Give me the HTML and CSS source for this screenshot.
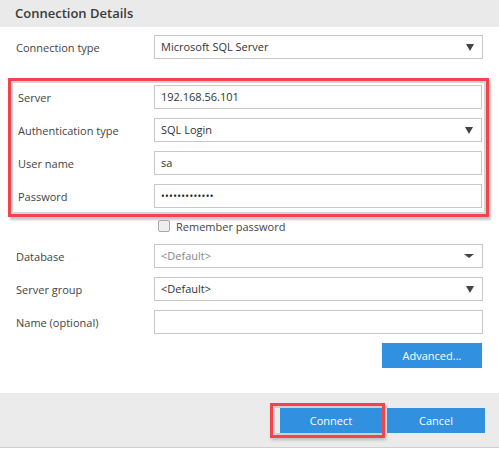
FILE: index.html
```html
<!DOCTYPE html>
<html lang="en">
<head>
    <meta charset="UTF-8">
    <title>Connection Details</title>
    <link rel="stylesheet" href="styles.css">
</head>
<body>

    <header class="dialog-title">Connection Details</header>

    <main class="dialog-body">
        <div class="row">
            <label>Connection type</label>
            <div class="select">
                <span>Microsoft SQL Server</span>
                <i class="caret"></i>
            </div>
        </div>

        <div class="highlight">
            <div class="row">
                <label>Server</label>
                <div class="field">192.168.56.101</div>
            </div>
            <div class="row">
                <label>Authentication type</label>
                <div class="select">
                    <span>SQL Login</span>
                    <i class="caret"></i>
                </div>
            </div>
            <div class="row">
                <label>User name</label>
                <div class="field">sa</div>
            </div>
            <div class="row">
                <label>Password</label>
                <div class="field dots">&bull;&bull;&bull;&bull;&bull;&bull;&bull;&bull;&bull;&bull;&bull;&bull;&bull;</div>
            </div>
        </div>

        <div class="row remember">
            <span></span>
            <label class="check"><span class="box"></span>Remember password</label>
        </div>

        <div class="row">
            <label>Database</label>
            <div class="select">
                <span class="placeholder">&lt;Default&gt;</span>
                <i class="caret small"></i>
            </div>
        </div>
        <div class="row">
            <label>Server group</label>
            <div class="select">
                <span>&lt;Default&gt;</span>
                <i class="caret"></i>
            </div>
        </div>
        <div class="row">
            <label>Name (optional)</label>
            <div class="field"></div>
        </div>

        <div class="actions">
            <button class="btn">Advanced...</button>
        </div>
    </main>

    <footer class="dialog-footer">
        <span class="highlight-btn"><button class="btn">Connect</button></span>
        <button class="btn">Cancel</button>
    </footer>

</body>
</html>
```

FILE: styles.css
```css
/* Global */
body {
    font-family: 'Open Sans', 'Noto Sans', sans-serif;
    font-size: 11px;
    color: #444;
    background-color: #fff;
    margin: 0;
    padding: 0;
    width: 499px;
}

/* Title bar */
.dialog-title {
    height: 27px;
    line-height: 26px;
    background-color: #e9eae9;
    padding-left: 15px;
    font-size: 13px;
    font-weight: 600;
    color: #3a3a3a;
}

.dialog-body {
    padding: 8px 16px 0 16px;
}

.row {
    display: grid;
    grid-template-columns: 138px 1fr;
    align-items: center;
    margin-bottom: 9px;
}

.row label {
    color: #444;
}

.field, .select {
    height: 22px;
    line-height: 22px;
    border: 1px solid #c8c8c8;
    padding: 0 6px;
    color: #333;
    background: #fff;
}

.select {
    position: relative;
}

.caret {
    position: absolute;
    right: 8px;
    top: 8px;
    width: 0;
    height: 0;
    border-left: 4px solid transparent;
    border-right: 4px solid transparent;
    border-top: 7px solid #444;
}

.caret.small {
    top: 9px;
    border-top-width: 4px;
    border-left-width: 5px;
    border-right-width: 5px;
}

.placeholder {
    color: #888;
}

.dots {
    font-size: 10px;
    letter-spacing: 0.3px;
    color: #222;
}

/* Red highlight (annotation) */
.highlight {
    margin: 19px -6px 2px -8px;
    border: 3px solid #f2444a;
    box-shadow: inset 0 0 0 2px #d4d4d4, 2px 3px 2px #c8c8c8;
    padding: 4px 4px 6px 7px;
}

.highlight .row {
    grid-template-columns: 136px 1fr;
}

.highlight .row:last-child {
    margin-bottom: 0;
}

.remember {
    margin-bottom: 11px;
}

.check {
    display: flex;
    align-items: center;
    gap: 6px;
    padding-left: 4px;
    height: 14px;
}

.box {
    width: 10px;
    height: 10px;
    border: 1px solid #aaa;
    border-radius: 2px;
    background: #eee;
}

.actions {
    display: flex;
    justify-content: flex-end;
    padding-right: 1px;
}

.btn {
    font-family: inherit;
    font-size: 11px;
    background-color: #3290e0;
    color: #fff;
    border: none;
    height: 25px;
    width: 100px;
    padding: 0;
    cursor: pointer;
}

/* Footer */
.dialog-footer {
    margin-top: 25px;
    height: 55px;
    background-color: #ebebeb;
    border-bottom: 1px solid #d0d0d0;
    display: flex;
    justify-content: flex-end;
    align-items: flex-start;
    padding: 10px 14px 0 0;
    box-sizing: border-box;
}

.highlight-btn {
    display: flex;
    border: 3px solid #f2444a;
    box-shadow: inset 0 0 0 2px #cfcfcf, 1px 2px 3px #bbb;
    padding: 2px 0 2px 7px;
    margin-right: 2px;
}

.highlight-btn .btn {
    width: 102px;
}

.dialog-footer > .btn {
    margin-top: 5px;
    width: 98px;
}
```
